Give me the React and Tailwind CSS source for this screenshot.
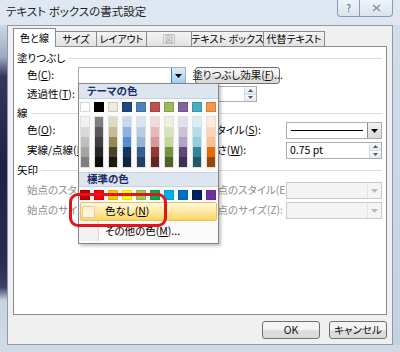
import React from 'react';
import clsx from 'clsx';

const THEME = [
  {top: '#ffffff', shades: ['#f2f2f2', '#d8d8d8', '#bfbfbf', '#a5a5a5', '#7f7f7f']},
  {top: '#000000', shades: ['#7f7f7f', '#595959', '#3f3f3f', '#262626', '#0c0c0c']},
  {top: '#eeece1', shades: ['#ddd9c3', '#c4bd97', '#938953', '#494429', '#1d1b10']},
  {top: '#1f497d', shades: ['#c6d9f0', '#8db3e2', '#548dd4', '#17365d', '#0f243e']},
  {top: '#4f81bd', shades: ['#dbe5f1', '#b8cce4', '#95b3d7', '#366092', '#244061']},
  {top: '#c0504d', shades: ['#f2dcdb', '#e5b9b7', '#d99694', '#953734', '#632423']},
  {top: '#9bbb59', shades: ['#ebf1dd', '#d7e3bc', '#c3d69b', '#76923c', '#4f6128']},
  {top: '#8064a2', shades: ['#e5e0ec', '#ccc1d9', '#b2a2c7', '#5f497a', '#3f3151']},
  {top: '#4bacc6', shades: ['#dbeef3', '#b7dde8', '#92cddc', '#31859b', '#205867']},
  {top: '#f79646', shades: ['#fdeada', '#fbd5b5', '#fac08f', '#e36c09', '#974806']},
];

const STANDARD = ['#c00000', '#ff0000', '#ffc000', '#ffff00', '#92d050', '#00b050', '#00b0f0', '#0070c0', '#002060', '#7030a0'];

const TABS = [
  {label: '色と線',          w: 'w-[43px]', active: true},
  {label: 'サイズ',          w: 'w-[42px]'},
  {label: 'レイアウト',      w: 'w-[51px]'},
  {label: '図',              w: 'w-[46px]', disabled: true},
  {label: 'テキスト ボックス', w: 'w-[73px]'},
  {label: '代替テキスト',    w: 'w-[62px]'},
];

// underlined access key, e.g. 色(C)
const K = ({children}) => <span className="underline underline-offset-1">{children}</span>;

const Tri = ({color = '#000'}) => (
  <svg width="7" height="4" viewBox="0 0 7 4">
    <polygon points="0,0 7,0 3.5,4" fill={color} />
  </svg>
);

const SpinButtons = () => (
  <div className="flex flex-col w-[12px] h-full border-l border-[#d5dbe2]">
    <div className="flex-1 flex items-center justify-center bg-gradient-to-b from-[#f7f9fb] to-[#e4e9ef] border-b border-[#d5dbe2]">
      <svg width="5" height="3" viewBox="0 0 5 3"><polygon points="0,3 5,3 2.5,0" fill="#4d5a6b" /></svg>
    </div>
    <div className="flex-1 flex items-center justify-center bg-gradient-to-b from-[#f7f9fb] to-[#e4e9ef]">
      <svg width="5" height="3" viewBox="0 0 5 3"><polygon points="0,0 5,0 2.5,3" fill="#4d5a6b" /></svg>
    </div>
  </div>
);

const Dropdown = ({w, disabled, hot, children}) => (
  <div className={clsx(
    'flex h-full border',
    w,
    disabled ? 'bg-[#f4f4f4] border-[#c9c9c9]' : 'bg-white border-[#abadb3]',
  )}>
    <div className="flex-1 flex items-center px-[4px] overflow-hidden">{children}</div>
    <div className={clsx(
      'w-[14px] flex items-center justify-center border-l',
      hot && 'bg-gradient-to-b from-[#d9eefc] to-[#9fcdf0] border-[#3c7fb1]',
      !hot && !disabled && 'bg-gradient-to-b from-[#f3f3f3] to-[#d9d9d9] border-[#8e8f8f]',
      disabled && 'border-[#e3e3e3]',
    )}>
      <Tri color={disabled ? '#b9b9b9' : '#000'} />
    </div>
  </div>
);

const Button = ({w, children}) => (
  <div className={clsx(
    'h-full flex items-center justify-center whitespace-nowrap rounded-[3px] border border-[#707070] bg-gradient-to-b from-[#f4f4f4] from-45% to-[#dcdcdc] to-55% text-[#111]',
    w,
  )}>
    {children}
  </div>
);

const Section = ({children, mt}) => (
  <div className={clsx('flex items-center h-[12px] pl-[3px] pr-[4px]', mt)}>
    <span>{children}</span>
    <div className="flex-1 ml-[3px] border-t border-[#d5dfe5]" />
  </div>
);

const Row = ({mt, label, right, rightCtrl, disabled}) => (
  <div className={clsx('flex items-center h-[17px] pl-[13px] whitespace-nowrap', mt, disabled && 'text-[#8d8d8d]')}>
    <div className="w-[51px]">{label}</div>
    <div className="w-[129px] h-full">
      {!disabled && <Dropdown w="w-[108px]" />}
    </div>
    <div className="w-[79px]">{right}</div>
    {rightCtrl}
  </div>
);

function ColorPopup() {
  return (
    <div className="absolute left-[78px] top-[83px] w-[141px] border border-[#868686] bg-[#fafafa] shadow-[2px_2px_3px_rgba(0,0,0,0.25)] pb-[2px]">
      <div className="h-[15px] flex items-center pl-[8px] bg-[#dde5ee] border-b border-[#c5d1de] font-bold text-[#1b2d6b]">
        テーマの色
      </div>
      <div className="flex gap-[4px] pl-[1px] mt-[3px]">
        {THEME.map(c => (
          <div key={c.top} className="w-[10px] h-[10px] border border-black/15" style={{background: c.top}} />
        ))}
      </div>
      <div className="flex gap-[4px] pl-[1px] mt-[4px]">
        {THEME.map(c => (
          <div key={c.top} className="flex flex-col w-[10px] border border-black/10">
            {c.shades.map(s => <div key={s} className="h-[10px]" style={{background: s}} />)}
          </div>
        ))}
      </div>
      <div className="h-[15px] flex items-center pl-[8px] mt-[4px] bg-[#dde5ee] border-y border-[#c5d1de] font-bold text-[#1b2d6b]">
        標準の色
      </div>
      <div className="flex gap-[4px] pl-[1px] mt-[3px]">
        {STANDARD.map(s => (
          <div key={s} className="w-[10px] h-[10px] border border-black/10" style={{background: s}} />
        ))}
      </div>
      <div className="mt-[2px] bg-[linear-gradient(to_right,#f1f1f1_19px,#dcdcdc_19px,#dcdcdc_20px,#ffffff_20px,#ffffff_21px,#fafafa_21px)]">
        <div className="mx-[1px] h-[19px] flex items-center rounded-[2px] border border-[#e6c35f] bg-gradient-to-b from-[#fff8dc] via-[#ffe9a3] to-[#fbd460]">
          <div className="ml-[1px] w-[13px] h-[12px] border border-[#d9cfae] bg-[#fdf4d8]" />
          <span className="ml-[10px]">色なし(<K>N</K>)</span>
        </div>
        <div className="h-[20px] flex items-center pl-[26px]">
          その他の色(<K>M</K>)...
        </div>
      </div>
    </div>
  );
}

export default function App() {
  return (
    <div className="relative w-[400px] h-[352px] overflow-hidden flex flex-col bg-gradient-to-b from-[#dfe8f2] to-[#c9d6e4] font-['Noto_Sans_CJK_JP','Noto_Sans',sans-serif] [font-feature-settings:'palt'] text-[10.5px] leading-none text-black">
      {/* title bar */}
      <div className="h-[25px] flex justify-between">
        <div className="pl-[6px] pt-[6px] text-[11.5px] text-[#1e1e1e]">テキスト ボックスの書式設定</div>
        <div className="flex mr-[7px] h-[17px]">
          <div className="w-[23px] flex items-center justify-center border border-t-0 border-[#8b9bb1] rounded-bl-[4px] bg-gradient-to-b from-[#eef3f8] to-[#dbe4ee] text-[#56657a] text-[10px]">?</div>
          <div className="w-[33px] flex items-center justify-center border border-t-0 border-l-0 border-[#8b9bb1] rounded-br-[4px] bg-gradient-to-b from-[#eef3f8] to-[#dbe4ee]">
            <svg width="9" height="8" viewBox="0 0 9 8"><path d="M1 1 L8 7 M8 1 L1 7" stroke="#8593a6" strokeWidth="1.6" /></svg>
          </div>
        </div>
      </div>

      <div className="flex h-[320px]">
        <div className="w-[7px] bg-[linear-gradient(to_bottom,#cbd7e4_0%,#9ea9bf_10%,#34365c_16%,#1e2044_45%,#2a2b52_75%,#3d4166_82%,#c6d2e0_86%,#d1dbe6_100%)]" />

        {/* dialog body */}
        <div className="flex-1 flex flex-col bg-[#f0f0f0] border border-[#8e9aa8] px-[5px]">
          {/* tabs */}
          <div className="flex items-end h-[19px] mt-[2px] -mb-px relative z-10 text-[10px]">
            {TABS.map(t => (
              <div key={t.label} className={clsx(
                'flex items-center justify-center border-x border-t border-[#898c95] whitespace-nowrap -mr-px',
                t.w,
                t.active
                  ? 'h-[19px] bg-white'
                  : 'h-[16px] border-b bg-gradient-to-b from-[#f3f3f3] to-[#e2e2e2]',
                t.disabled && 'text-[#a0a0a0]',
              )}>
                {t.disabled
                  ? <span className="border border-[#c4c4c4] px-[1px] text-[8px]">図</span>
                  : t.label}
              </div>
            ))}
          </div>

          {/* tab panel */}
          <div className="h-[269px] bg-white border border-[#898c95]">
            <Section mt="mt-[5px]">塗りつぶし</Section>
            <div className="flex items-center h-[17px] pl-[13px] mt-[3px]">
              <div className="w-[51px]">色(<K>C</K>):</div>
              <Dropdown w="w-[108px]" hot />
              <div className="ml-[9px] h-full">
                <Button w="w-[85px]">塗りつぶし効果(<K>F</K>)...</Button>
              </div>
            </div>
            <div className="flex items-center h-[16px] pl-[13px] mt-[2px]">
              <div className="w-[51px]">透過性(<K>T</K>):</div>
              <div className="w-[140px]" />
              <div className="w-[39px] h-full flex bg-white border border-[#abadb3]">
                <div className="flex-1" />
                <SpinButtons />
              </div>
            </div>

            <Section mt="mt-[5px]">線</Section>
            <Row
              mt="mt-[3px]"
              label={<>色(<K>O</K>):</>}
              right={<>スタイル(<K>S</K>):</>}
              rightCtrl={
                <Dropdown w="w-[96px]">
                  <div className="w-[72px] border-t border-black" />
                </Dropdown>
              }
            />
            <Row
              mt="mt-[3px]"
              label={<>実線/点線(<K>D</K>):</>}
              right={<>太さ(<K>W</K>):</>}
              rightCtrl={
                <div className="w-[96px] h-full flex bg-white border border-[#abadb3]">
                  <div className="flex-1 flex items-center pl-[3px]">0.75 pt</div>
                  <SpinButtons />
                </div>
              }
            />

            <Section mt="mt-[5px]">矢印</Section>
            <Row
              mt="mt-[6px]"
              disabled
              label="始点のスタイル(B):"
              right="終点のスタイル(E):"
              rightCtrl={<Dropdown w="w-[96px]" disabled />}
            />
            <Row
              mt="mt-[3px]"
              disabled
              label="始点のサイズ(I):"
              right="終点のサイズ(Z):"
              rightCtrl={<Dropdown w="w-[96px]" disabled />}
            />
          </div>

          {/* footer */}
          <div className="flex justify-end gap-[9px] h-[18px] mt-[6px]">
            <Button w="w-[58px]">OK</Button>
            <Button w="w-[58px]">キャンセル</Button>
          </div>
        </div>

        <div className="w-[7px] bg-gradient-to-b from-[#d2dde9] to-[#c3d1e0]" />
      </div>

      <div className="flex-1 bg-[#cfdae6]" />

      <ColorPopup />

      {/* red highlight around 色なし */}
      <div className="absolute left-[69px] top-[193px] w-[98px] h-[34px] rounded-[9px] border-[3px] border-[#e3141b]" />
    </div>
  );
}
